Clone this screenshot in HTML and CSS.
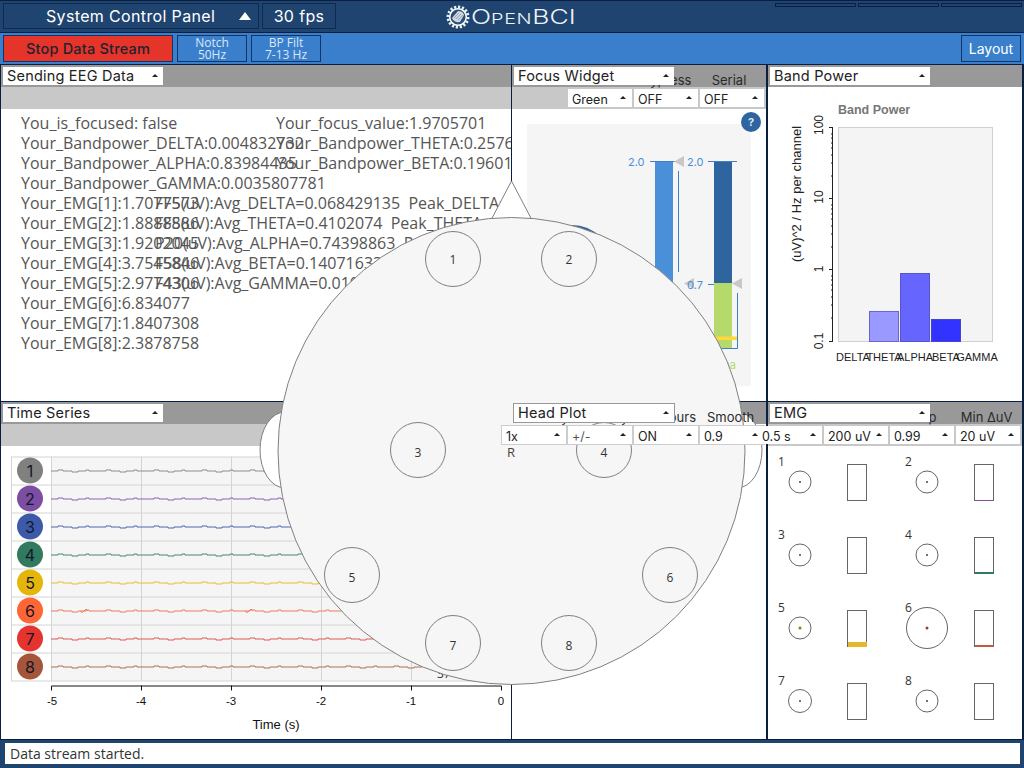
FILE: index.html
```html
<!DOCTYPE html>
<html lang="en">
<head>
<meta charset="utf-8">
<title>OpenBCI GUI</title>
<link rel="stylesheet" href="styles.css">
</head>
<body>
<div class="app">
  <header class="topbar">
    <div class="top-btn panel-btn"><span>System Control Panel</span><i class="big-caret"></i></div>
    <div class="top-btn fps-btn">30 fps</div>
    <div class="logo">
      <svg class="logo-mark" viewBox="0 0 24 24" width="24" height="24" aria-hidden="true">
        <circle cx="12" cy="12" r="10" class="lg-teeth"/>
        <circle cx="12" cy="12" r="8.3" class="lg-ring"/>
        <path d="M6 13 L12 6 Q17 6 18 10 L14 17 Q8 18 6 13Z" class="lg-fan"/>
        <path d="M8 13 L13 8 M10 14 L15 9 M12 15 L17 10" class="lg-fan-l"/>
      </svg>
      <span class="logo-text"><b>O</b>PEN<b>BCI</b></span>
    </div>
    <div class="top-tabs"><i></i><i></i><i></i></div>
  </header>
  <nav class="toolbar">
    <div class="btn stop">Stop Data Stream</div>
    <div class="btn small">Notch<br>50Hz</div>
    <div class="btn small">BP Filt<br>7-13 Hz</div>
    <div class="btn layout">Layout</div>
  </nav>
  <main class="workspace">
    <section class="widget c-left">
      <div class="w-head"><div class="dd title">Sending EEG Data<i></i></div></div>
      <div class="w-sub"></div>
      <div class="eeg">
        <div class="row wide"><span>You_is_focused: false</span><span>Your_focus_value:1.9705701</span></div>
        <div class="row wide"><span>Your_Bandpower_DELTA:0.004832732</span><span>Your_Bandpower_THETA:0.2576812</span></div>
        <div class="row wide"><span>Your_Bandpower_ALPHA:0.83984435</span><span>Your_Bandpower_BETA:0.19601</span></div>
        <div class="row wide"><span>Your_Bandpower_GAMMA:0.0035807781</span></div>
        <div class="row narrow"><span>Your_EMG[1]:1.7077573</span><span>FF5(uV):Avg_DELTA=0.068429135  Peak_DELTA=0.1</span></div>
        <div class="row narrow"><span>Your_EMG[2]:1.8888586</span><span>FF8(uV):Avg_THETA=0.4102074  Peak_THETA=0.5</span></div>
        <div class="row narrow"><span>Your_EMG[3]:1.9202045</span><span>P20(uV):Avg_ALPHA=0.74398863  Peak_ALPHA</span></div>
        <div class="row narrow"><span>Your_EMG[4]:3.7545846</span><span>F58(uV):Avg_BETA=0.14071633</span></div>
        <div class="row narrow"><span>Your_EMG[5]:2.9774306</span><span>F43(uV):Avg_GAMMA=0.0101</span></div>
        <div class="row"><span>Your_EMG[6]:6.834077</span></div>
        <div class="row"><span>Your_EMG[7]:1.8407308</span></div>
        <div class="row"><span>Your_EMG[8]:2.3878758</span></div>
      </div>
    </section>

    <section class="widget c-mid">
      <div class="w-head"><div class="dd title">Focus Widget<i></i></div>
        <span class="lbl">Theme</span><span class="lbl">Keypress</span><span class="lbl">Serial</span></div>
      <div class="w-sub"><div class="dd">Green<i></i></div><div class="dd">OFF<i></i></div><div class="dd">OFF<i></i></div></div>
      <svg class="chart focus" viewBox="512 109 254 292" aria-label="Focus meter">
        <rect x="527" y="124" width="224" height="262" class="f-bg"/>
        <circle cx="572" cy="265" r="40" class="f-dark"/>
        <rect x="655" y="161" width="18" height="190" class="f-light"/>
        <rect x="714" y="161" width="18" height="122" class="f-dark"/>
        <rect x="714" y="283" width="18" height="66" class="f-green"/>
        <rect x="715" y="336.500" width="23" height="3.500" class="f-yellow"/>
        <path d="M650 161.500H678M708 161.500H737M678.500 171V272M708 284.500H714M737.500 293V348.500H714" class="f-line"/>
        <path d="M684 156V167L674 161.500ZM694 278V289L684 283.500Z M742 278V289L732 283.500Z" class="f-tri"/>
        <text x="628" y="166" class="f-num">2.0</text>
        <text x="687" y="166" class="f-num">2.0</text>
        <text x="687" y="289" class="f-num">0.7</text>
        <text x="736" y="369" class="f-alpha">Alpha</text>
        <circle cx="751" cy="122" r="10" class="f-dark"/>
        <text x="751" y="126" class="f-help">?</text>
      </svg>
    </section>

    <section class="widget c-right">
      <div class="w-head"><div class="dd title">Band Power<i></i></div></div>
      <svg class="chart band" viewBox="768 87 254 314" aria-label="Band power chart">
        <text x="838" y="114" class="b-title">Band Power</text>
        <rect x="838.500" y="127.500" width="154" height="214" class="b-plot"/>
        <rect x="869.500" y="311.500" width="29" height="30" class="b-1"/>
        <rect x="900.500" y="273.500" width="29" height="68" class="b-2"/>
        <rect x="931.500" y="319.500" width="29" height="22" class="b-3"/>
        <path d="M832.500 127V341M829 127.500H833M829 198.500H833M829 269.500H833M829 341.500H833M831 134H833M831 138H833M831 143H833M831 148H833M831 155H833M831 163H833M831 176H833M831 205H833M831 209H833M831 214H833M831 219H833M831 226H833M831 234H833M831 247H833M831 276H833M831 280H833M831 285H833M831 290H833M831 297H833M831 305H833M831 318H833" class="b-axis"/>
        <text transform="translate(823 125) rotate(-90)" class="b-tick">100</text>
        <text transform="translate(823 197) rotate(-90)" class="b-tick">10</text>
        <text transform="translate(823 269) rotate(-90)" class="b-tick">1</text>
        <text transform="translate(823 341) rotate(-90)" class="b-tick">0.1</text>
        <text transform="translate(801 194) rotate(-90)" class="b-ytitle">(uV)^2 / Hz per channel</text>
        <text x="853" y="361" class="b-x">DELTA</text>
        <text x="884" y="361" class="b-x">THETA</text>
        <text x="915" y="361" class="b-x">ALPHA</text>
        <text x="946" y="361" class="b-x">BETA</text>
        <text x="977" y="361" class="b-x">GAMMA</text>
      </svg>
    </section>

    <section class="widget c-left">
      <div class="w-head"><div class="dd title">Time Series<i></i></div></div>
      <div class="w-sub"></div>
      <svg class="chart" viewBox="1 446 510 292" aria-label="Time series chart">
        <defs>
          <path id="wave" d="M51 0h7v-1h5v1h9v1h6v-1h8v-1h3v1h10h7v-1h5v1h9v1h6v-1h8v-1h3v1h10h7v-1h5v1h9v1h6v-1h8v-1h3v1h10h7v-1h5v1h9v1h6v-1h8v-1h3v1h10h7v-1h5v1h9v1h6v-1h8v-1h3v1h10h7v-1h5v1h9v1h6v-1h8v-1h3v1h10h7v-1h5v1h9v1h6v-1h8v-1h3v1h10h7v-1h5v1h9v1h6v-1h8v-1h3v1h10h7v-1h5v1h9v1h6v-1h8v-1h3v1h10"/>
        </defs>
        <rect x="11.500" y="456.500" width="40" height="224" class="t-label"/>
        <rect x="51.500" y="456.500" width="450" height="224" class="t-plot"/>
        <path d="M141.500 456V680M231.500 456V680M321.500 456V680M411.500 456V680M11 484.500H501M11 512.500H501M11 540.500H501M11 568.500H501M11 596.500H501M11 624.500H501M11 652.500H501" class="t-grid"/>
        <use href="#wave" y="470.500" class="w1"/>
        <use href="#wave" y="498.500" class="w2"/>
        <use href="#wave" y="526.500" class="w3"/>
        <use href="#wave" y="554.500" class="w4"/>
        <use href="#wave" y="582.500" class="w5"/>
        <use href="#wave" y="610.500" class="w6"/>
        <use href="#wave" y="638.500" class="w7"/>
        <use href="#wave" y="666.500" class="w8"/>
        <path d="M80 610.500l2 1.500l2 -1.500l2 -2l2 2M245 610.500l2 1.500l2 -1.500l2 -2l2 2" class="w6 bump"/>
        <circle cx="30" cy="470" r="13" class="d1"/><text x="30" y="476" class="t-ch">1</text>
        <circle cx="30" cy="498" r="13" class="d2"/><text x="30" y="504" class="t-ch">2</text>
        <circle cx="30" cy="526" r="13" class="d3"/><text x="30" y="532" class="t-ch">3</text>
        <circle cx="30" cy="554" r="13" class="d4"/><text x="30" y="560" class="t-ch">4</text>
        <circle cx="30" cy="582" r="13" class="d5"/><text x="30" y="588" class="t-ch">5</text>
        <circle cx="30" cy="610" r="13" class="d6"/><text x="30" y="616" class="t-ch">6</text>
        <circle cx="30" cy="638" r="13" class="d7"/><text x="30" y="644" class="t-ch">7</text>
        <circle cx="30" cy="666" r="13" class="d8"/><text x="30" y="672" class="t-ch">8</text>
        <text x="437" y="677" class="t-rail">37</text>
        <path d="M51.500 690V685.500H501.500V690M141.500 685V690M231.500 685V690M321.500 685V690M411.500 685V690" class="t-axis"/>
        <text x="52" y="704" class="t-x">-5</text>
        <text x="141" y="704" class="t-x">-4</text>
        <text x="231" y="704" class="t-x">-3</text>
        <text x="321" y="704" class="t-x">-2</text>
        <text x="411" y="704" class="t-x">-1</text>
        <text x="501" y="704" class="t-x">0</text>
        <text x="276" y="728" class="t-x time">Time (s)</text>
      </svg>
    </section>

    <section class="widget c-mid head-w">
      <div class="w-head"><div class="dd title bordered">Head Plot<i></i></div>
        <span class="lbl">Intensity</span><span class="lbl">Polarity</span><span class="lbl">Contours</span><span class="lbl">Smooth</span></div>
      <div class="w-sub flush"><div class="dd line">1x<i></i></div><div class="dd line dim">+/-<i></i></div><div class="dd line">ON<i></i></div><div class="dd line">0.9<i></i></div></div>
    </section>

    <section class="widget c-right emg-w">
      <div class="w-head"><div class="dd title">EMG<i></i></div>
        <span class="lbl">Smooth</span><span class="lbl">uV Limit</span><span class="lbl creep">Creep</span><span class="lbl">Min ΔuV</span></div>
      <div class="w-sub"><div class="dd">0.5 s<i></i></div><div class="dd">200 uV<i></i></div><div class="dd">0.99<i></i></div><div class="dd">20 uV<i></i></div></div>
      <svg class="chart emg" viewBox="768 446 254 293" aria-label="EMG channels">
        <text x="778" y="466">1</text><text x="905" y="466">2</text>
        <text x="778" y="539">3</text><text x="905" y="539">4</text>
        <text x="778" y="612">5</text><text x="905" y="612">6</text>
        <text x="778" y="685">7</text><text x="905" y="685">8</text>
        <circle cx="800" cy="482" r="11" class="e-c"/><circle cx="800" cy="482" r="1" class="e-d"/>
        <circle cx="927" cy="482" r="11" class="e-c"/><circle cx="927" cy="482" r="1" class="e-d"/>
        <circle cx="800" cy="555" r="11" class="e-c"/><circle cx="800" cy="555" r="1" class="e-d"/>
        <circle cx="927" cy="555" r="11" class="e-c"/><circle cx="927" cy="555" r="1" class="e-d"/>
        <circle cx="800" cy="628" r="11" class="e-c"/><circle cx="800" cy="628" r="1.500" class="e-d5"/>
        <circle cx="927" cy="628" r="20.500" class="e-c"/><circle cx="927" cy="628" r="1.500" class="e-d6"/>
        <circle cx="800" cy="701" r="11.500" class="e-c"/><circle cx="800" cy="701" r="1" class="e-d"/>
        <circle cx="927" cy="701" r="11" class="e-c"/><circle cx="927" cy="701" r="1" class="e-d"/>
        <rect x="847.500" y="464.500" width="19" height="36" class="e-c"/>
        <rect x="974.500" y="464.500" width="19" height="36" class="e-c"/>
        <rect x="847.500" y="537.500" width="19" height="36" class="e-c"/>
        <rect x="974.500" y="537.500" width="19" height="36" class="e-c"/>
        <rect x="847.500" y="610.500" width="19" height="36" class="e-c"/>
        <rect x="974.500" y="610.500" width="19" height="36" class="e-c"/>
        <rect x="847.500" y="683.500" width="19" height="36" class="e-c"/>
        <rect x="974.500" y="683.500" width="19" height="36" class="e-c"/>
        <rect x="848" y="642" width="19" height="5" class="e-f5"/>
        <rect x="975" y="572" width="19" height="2" class="e-f4"/>
        <rect x="975" y="645" width="19" height="2" class="e-f6"/>
        <rect x="975" y="500" width="19" height="1" class="e-f2"/>
      </svg>
    </section>

    <svg class="head" viewBox="0 65 1024 674" aria-label="Head plot">
      <ellipse cx="285" cy="450" rx="25" ry="38" class="h-part"/>
      <ellipse cx="737" cy="450" rx="25" ry="38" class="h-part"/>
      <path d="M511.500 181L490 222H533Z" class="h-part"/>
      <circle cx="511.500" cy="451" r="233.500" class="h-skull"/>
      <circle cx="453" cy="259" r="27.500" class="h-el"/><text x="453" y="264" class="h-t">1</text>
      <circle cx="569" cy="259" r="27.500" class="h-el"/><text x="569" y="264" class="h-t">2</text>
      <circle cx="418" cy="450" r="27.500" class="h-el"/><text x="418" y="457" class="h-t">3</text>
      <circle cx="604" cy="450" r="27.500" class="h-el"/><text x="604" y="457" class="h-t">4</text>
      <circle cx="352" cy="575" r="27.500" class="h-el"/><text x="352" y="582" class="h-t">5</text>
      <circle cx="670" cy="575" r="27.500" class="h-el"/><text x="670" y="582" class="h-t">6</text>
      <circle cx="453" cy="643" r="27.500" class="h-el"/><text x="453" y="650" class="h-t">7</text>
      <circle cx="569" cy="643" r="27.500" class="h-el"/><text x="569" y="650" class="h-t">8</text>
      <text x="507" y="457" class="h-r">R</text>
    </svg>
  </main>
  <footer class="status"><div class="status-box">Data stream started.</div></footer>
</div>
</body>
</html>
```

FILE: styles.css
```css
* { box-sizing: border-box; }
html, body { margin: 0; padding: 0; }
body { width: 1024px; height: 768px; overflow: hidden; background: #1f4470; }
.app { width: 1024px; height: 768px; display: flex; flex-direction: column; font-family: "Open Sans", "Liberation Sans", sans-serif; }

.topbar { height: 33px; flex: none; background: #1f4470; border-top: 1px solid #0a1f3f; border-bottom: 1px solid #0a1f3f; display: flex; gap: 3px; padding: 2px 3px 2px; position: relative; font-family: Inter, "Liberation Sans", sans-serif; color: #fff; }
.top-btn { height: 26px; border: 1px solid #0f2a50; display: flex; align-items: center; font-size: 16px; letter-spacing: .35px; }
.panel-btn { width: 256px; padding: 0 7px 0 42px; position: relative; justify-content: space-between; }
.big-caret { width: 0; height: 0; border-left: 6.500px solid transparent; border-right: 6.500px solid transparent; border-bottom: 8px solid #fff; }
.fps-btn { width: 74px; justify-content: center; }
.logo { position: absolute; left: 446px; top: 3px; display: flex; align-items: center; gap: 1px; height: 26px; }
.logo-mark { display: block; }
.lg-teeth { fill: none; stroke: #e8edf2; stroke-width: 3; stroke-dasharray: 2.200 1.700; }
.lg-ring { fill: #2b4f7b; stroke: #fff; stroke-width: 1.500; }
.lg-fan { fill: #cfd6de; }
.lg-fan-l { fill: none; stroke: #7f8fa3; stroke-width: .7; }
.logo-text { font-size: 15px; font-weight: 300; letter-spacing: .5px; color: #eef2f7; white-space: nowrap; transform: scaleX(1.32); transform-origin: left center; }
.logo-text b { font-weight: 300; font-size: 20px; letter-spacing: 0; }
.top-tabs { position: absolute; right: 2px; top: 2px; display: flex; gap: 2px; }
.top-tabs i { display: block; width: 81px; height: 4px; border: 1px solid #0a1f3f; }

.toolbar { height: 32px; flex: none; background: #3a7fcb; display: flex; gap: 4px; padding: 2px 3px 0; border-bottom: 1px solid #0a1f3f; font-family: Inter, "Liberation Sans", sans-serif; }
.btn { height: 27px; border: 1px solid #123566; display: flex; align-items: center; justify-content: center; text-align: center; }
.stop { width: 170px; background: #e5352b; color: #1f2230; font-size: 14.500px; font-weight: 500; letter-spacing: .2px; }
.small { width: 70px; font-size: 12px; line-height: 12px; color: #dbe8f6; font-family: "Open Sans", sans-serif; }
.layout { width: 60px; margin-left: auto; color: #fff; font-size: 14px; }

.workspace { height: 674px; flex: none; position: relative; display: grid; grid-template-columns: 512px 256px 256px; grid-template-rows: 337px 337px; background: #fff; }
.widget { background: #fff; display: flex; flex-direction: column; border-right: 2px solid #0a1f3f; min-width: 0; }
.c-left { border-left: 1px solid #0a1f3f; border-right: 1px solid #0a1f3f; overflow: hidden; }
.widget:nth-child(-n+3) { border-bottom: 1px solid #0a1f3f; }

.w-head { height: 22px; flex: none; background: #999; display: flex; justify-content: flex-end; align-items: flex-end; gap: 2px; padding-right: 5px; position: relative; }
.w-sub { height: 22px; flex: none; background: #c8c8c8; display: flex; justify-content: flex-end; align-items: center; gap: 2px; padding-right: 2px; }
.w-sub.flush { gap: 0; padding-right: 1px; background: transparent; }
.lbl { width: 64px; margin-bottom: -1px; text-align: center; font-size: 13px; line-height: 16px; color: #2b2b2b; font-family: Inter, "Liberation Sans", sans-serif; white-space: nowrap; position: relative; z-index: 2; }
.lbl.creep { transform: translateX(-6px); }
.dd { width: 64px; height: 18px; flex: none; background: #fff; color: #222; font-family: Inter, "Liberation Sans", sans-serif; font-size: 12.500px; line-height: 21px; padding-left: 4px; position: relative; z-index: 2; white-space: nowrap; }
.dd i { position: absolute; right: 6px; top: 7px; width: 0; height: 0; border-left: 3.500px solid transparent; border-right: 3.500px solid transparent; border-bottom: 3.500px solid #222; }
.dd.title { position: absolute; left: 2px; top: 2px; width: 160px; height: 18px; font-size: 14.500px; letter-spacing: .2px; line-height: 18px; padding-left: 4px; z-index: 3; }
.dd.title i { right: 5px; top: 7px; }
.dd.bordered { left: 1px; top: 1px; width: 162px; height: 20px; border: 1px solid #999; }
.dd.line { width: 66px; height: 20px; border: 1px solid #ccc; line-height: 21px; }
.dd.dim { color: #555; }

.eeg { padding: 4px 0 0 20px; font-size: 16px; line-height: 20px; color: #555; }
.row { display: grid; grid-template-columns: 1fr; white-space: pre; height: 20px; }
.row.wide { grid-template-columns: 255px 1fr; }
.row.narrow { grid-template-columns: 134px 1fr; }

.chart { display: block; flex: 1; width: 100%; min-height: 0; overflow: visible; }
.focus text, .band text { font-family: "Liberation Sans", sans-serif; }
.f-bg { fill: #f5f5f5; }
.f-dark { fill: #2e659f; }
.f-light { fill: #4a90d9; }
.f-green { fill: #b5d96a; }
.f-yellow { fill: #ffd93b; }
.f-line { fill: none; stroke: #3f7fc6; stroke-width: 1; }
.f-tri { fill: #c8c8c8; }
.focus .f-num { font-family: Inter, sans-serif; font-size: 11px; fill: #4a90d9; }
.focus .f-alpha { font-family: Inter, sans-serif; font-size: 11px; fill: #b5d96a; text-anchor: end; }
.focus .f-help { font-family: Inter, sans-serif; font-size: 11px; font-weight: 700; fill: #dfe8f2; text-anchor: middle; }

.b-title { font-size: 12.500px; font-weight: 700; fill: #777; }
.b-plot { fill: #f4f4f4; stroke: #d0d0d0; }
.b-1 { fill: #9999ff; stroke: #6666cc; }
.b-2 { fill: #6666ff; stroke: #5555cc; }
.b-3 { fill: #3333ff; stroke: #4444cc; }
.b-axis { fill: none; stroke: #222; stroke-width: 1; }
.b-tick { font-size: 12px; fill: #222; text-anchor: middle; }
.b-ytitle { font-size: 13px; fill: #222; text-anchor: middle; }
.b-x { font-size: 11px; fill: #222; text-anchor: middle; }

.t-label { fill: #fff; stroke: #d4d4d4; }
.t-plot { fill: #f5f5f5; stroke: #d4d4d4; }
.t-grid { fill: none; stroke: #d4d4d4; }
.t-ch { font-family: Inter, sans-serif; font-size: 16px; fill: #14182a; text-anchor: middle; }
.t-axis { fill: none; stroke: #111; }
.t-x { font-family: "Liberation Sans", sans-serif; font-size: 11.500px; fill: #111; text-anchor: middle; }
.t-x.time { font-size: 13px; }
.t-rail { font-family: "Open Sans", sans-serif; font-size: 12px; fill: #333; }
use, .bump { fill: none; stroke-width: 1; }
.w1 { stroke: #8e8e8e; } .w2 { stroke: #8f63b5; } .w3 { stroke: #4f69b3; } .w4 { stroke: #4a8771; }
.w5 { stroke: #e3c02c; } .w6 { stroke: #f07c5a; } .w7 { stroke: #df5a52; } .w8 { stroke: #b36f56; }
.d1 { fill: #808080; } .d2 { fill: #7b4da3; } .d3 { fill: #3c5aa8; } .d4 { fill: #31795f; }
.d5 { fill: #e4b60c; } .d6 { fill: #ff6635; } .d7 { fill: #e5342d; } .d8 { fill: #a5563a; }

.emg text { font-family: "Open Sans", sans-serif; font-size: 12px; fill: #333; }
.e-c { fill: none; stroke: #666; }
.e-d { fill: #444; } .e-d5 { fill: #8a7a20; } .e-d6 { fill: #a33a35; }
.e-f5 { fill: #e4b72e; } .e-f4 { fill: #31795f; } .e-f6 { fill: #c05a40; } .e-f2 { fill: #7b4da3; }

.head { position: absolute; left: 0; top: 0; width: 1024px; height: 674px; z-index: 1; pointer-events: none; }
.h-part { fill: #fff; stroke: #808080; }
.h-skull { fill: #f6f6f6; stroke: #808080; }
.h-el { fill: none; stroke: #808080; }
.h-t { font-family: "Open Sans", sans-serif; font-size: 12px; fill: #333; text-anchor: middle; }
.h-r { font-family: "Open Sans", sans-serif; font-size: 13px; fill: #444; }

.status { flex: 1; background: #1f4470; border-top: 1px solid #0a1f3f; padding: 3px 4px 4px 5px; }
.status-box { background: #fff; height: 21px; font-size: 14px; line-height: 21px; padding-left: 5px; color: #333; }
```
